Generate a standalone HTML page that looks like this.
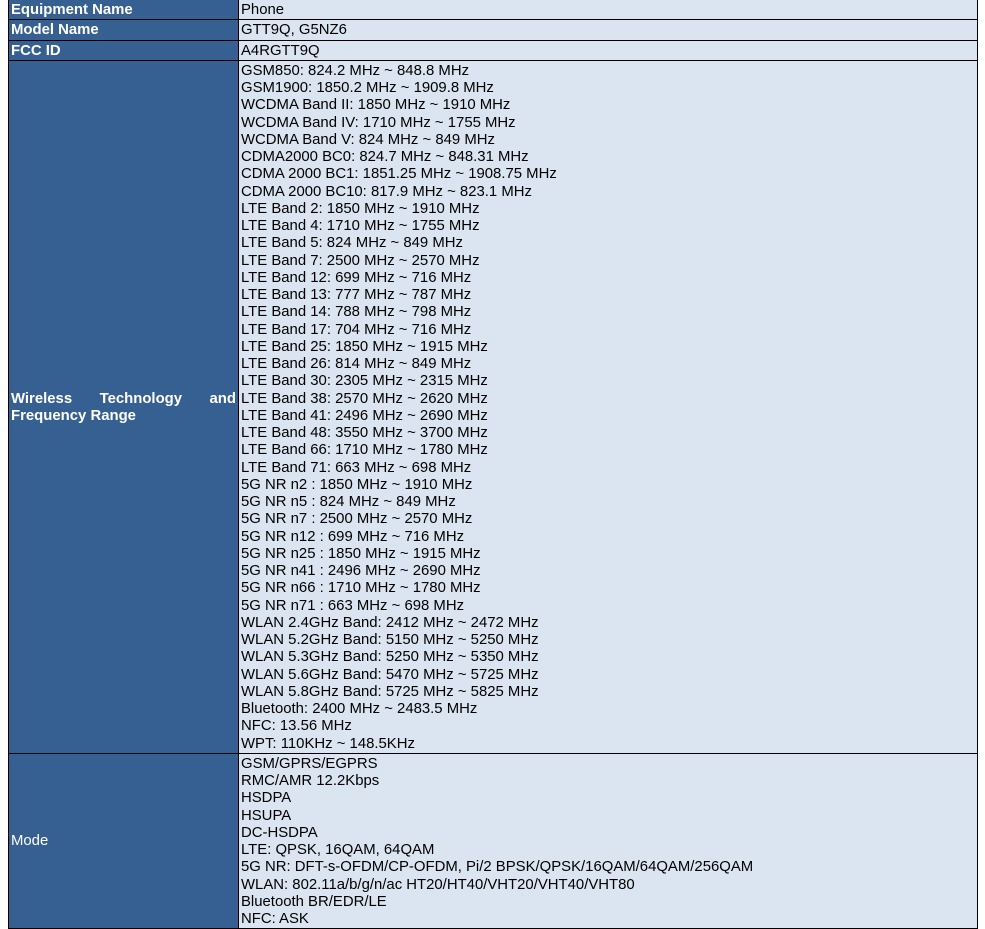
<!DOCTYPE html>
<html><head><style>
html,body{margin:0;padding:0;background:#fff;}
body{width:985px;height:900px;overflow:hidden;position:relative;}
table{position:absolute;left:8px;top:-1px;width:970px;border-collapse:collapse;font-family:"Liberation Sans",Arial,sans-serif;font-size:14.9px;line-height:17.25px;}
td{border:1px solid #000;padding:2px 2px 0 2px;vertical-align:middle;}
td.l{background:#366092;color:#fff;width:225px;}
td.b{font-weight:bold;}
td.r{background:#dbe5f1;color:#000;}
.j{text-align:justify;text-align-last:left;}
</style></head><body>
<table>
<tr><td class="l b">Equipment Name</td><td class="r">Phone</td></tr>
<tr><td class="l b">Model Name</td><td class="r">GTT9Q, G5NZ6</td></tr>
<tr><td class="l b">FCC ID</td><td class="r">A4RGTT9Q</td></tr>
<tr><td class="l b"><div class="j">Wireless Technology and Frequency Range</div></td><td class="r">GSM850: 824.2 MHz ~ 848.8 MHz<br>GSM1900: 1850.2 MHz ~ 1909.8 MHz<br>WCDMA Band II: 1850 MHz ~ 1910 MHz<br>WCDMA Band IV: 1710 MHz ~ 1755 MHz<br>WCDMA Band V: 824 MHz ~ 849 MHz<br>CDMA2000 BC0: 824.7 MHz ~ 848.31 MHz<br>CDMA 2000 BC1: 1851.25 MHz ~ 1908.75 MHz<br>CDMA 2000 BC10: 817.9 MHz ~ 823.1 MHz<br>LTE Band 2: 1850 MHz ~ 1910 MHz<br>LTE Band 4: 1710 MHz ~ 1755 MHz<br>LTE Band 5: 824 MHz ~ 849 MHz<br>LTE Band 7: 2500 MHz ~ 2570 MHz<br>LTE Band 12: 699 MHz ~ 716 MHz<br>LTE Band 13: 777 MHz ~ 787 MHz<br>LTE Band 14: 788 MHz ~ 798 MHz<br>LTE Band 17: 704 MHz ~ 716 MHz<br>LTE Band 25: 1850 MHz ~ 1915 MHz<br>LTE Band 26: 814 MHz ~ 849 MHz<br>LTE Band 30: 2305 MHz ~ 2315 MHz<br>LTE Band 38: 2570 MHz ~ 2620 MHz<br>LTE Band 41: 2496 MHz ~ 2690 MHz<br>LTE Band 48: 3550 MHz ~ 3700 MHz<br>LTE Band 66: 1710 MHz ~ 1780 MHz<br>LTE Band 71: 663 MHz ~ 698 MHz<br>5G NR n2 : 1850 MHz ~ 1910 MHz<br>5G NR n5 : 824 MHz ~ 849 MHz<br>5G NR n7 : 2500 MHz ~ 2570 MHz<br>5G NR n12 : 699 MHz ~ 716 MHz<br>5G NR n25 : 1850 MHz ~ 1915 MHz<br>5G NR n41 : 2496 MHz ~ 2690 MHz<br>5G NR n66 : 1710 MHz ~ 1780 MHz<br>5G NR n71 : 663 MHz ~ 698 MHz<br>WLAN 2.4GHz Band: 2412 MHz ~ 2472 MHz<br>WLAN 5.2GHz Band: 5150 MHz ~ 5250 MHz<br>WLAN 5.3GHz Band: 5250 MHz ~ 5350 MHz<br>WLAN 5.6GHz Band: 5470 MHz ~ 5725 MHz<br>WLAN 5.8GHz Band: 5725 MHz ~ 5825 MHz<br>Bluetooth: 2400 MHz ~ 2483.5 MHz<br>NFC: 13.56 MHz<br>WPT: 110KHz ~ 148.5KHz</td></tr>
<tr><td class="l">Mode</td><td class="r">GSM/GPRS/EGPRS<br>RMC/AMR 12.2Kbps<br>HSDPA<br>HSUPA<br>DC-HSDPA<br>LTE: QPSK, 16QAM, 64QAM<br>5G NR: DFT-s-OFDM/CP-OFDM, Pi/2 BPSK/QPSK/16QAM/64QAM/256QAM<br>WLAN: 802.11a/b/g/n/ac HT20/HT40/VHT20/VHT40/VHT80<br>Bluetooth BR/EDR/LE<br>NFC: ASK</td></tr>
</table>
</body></html>
